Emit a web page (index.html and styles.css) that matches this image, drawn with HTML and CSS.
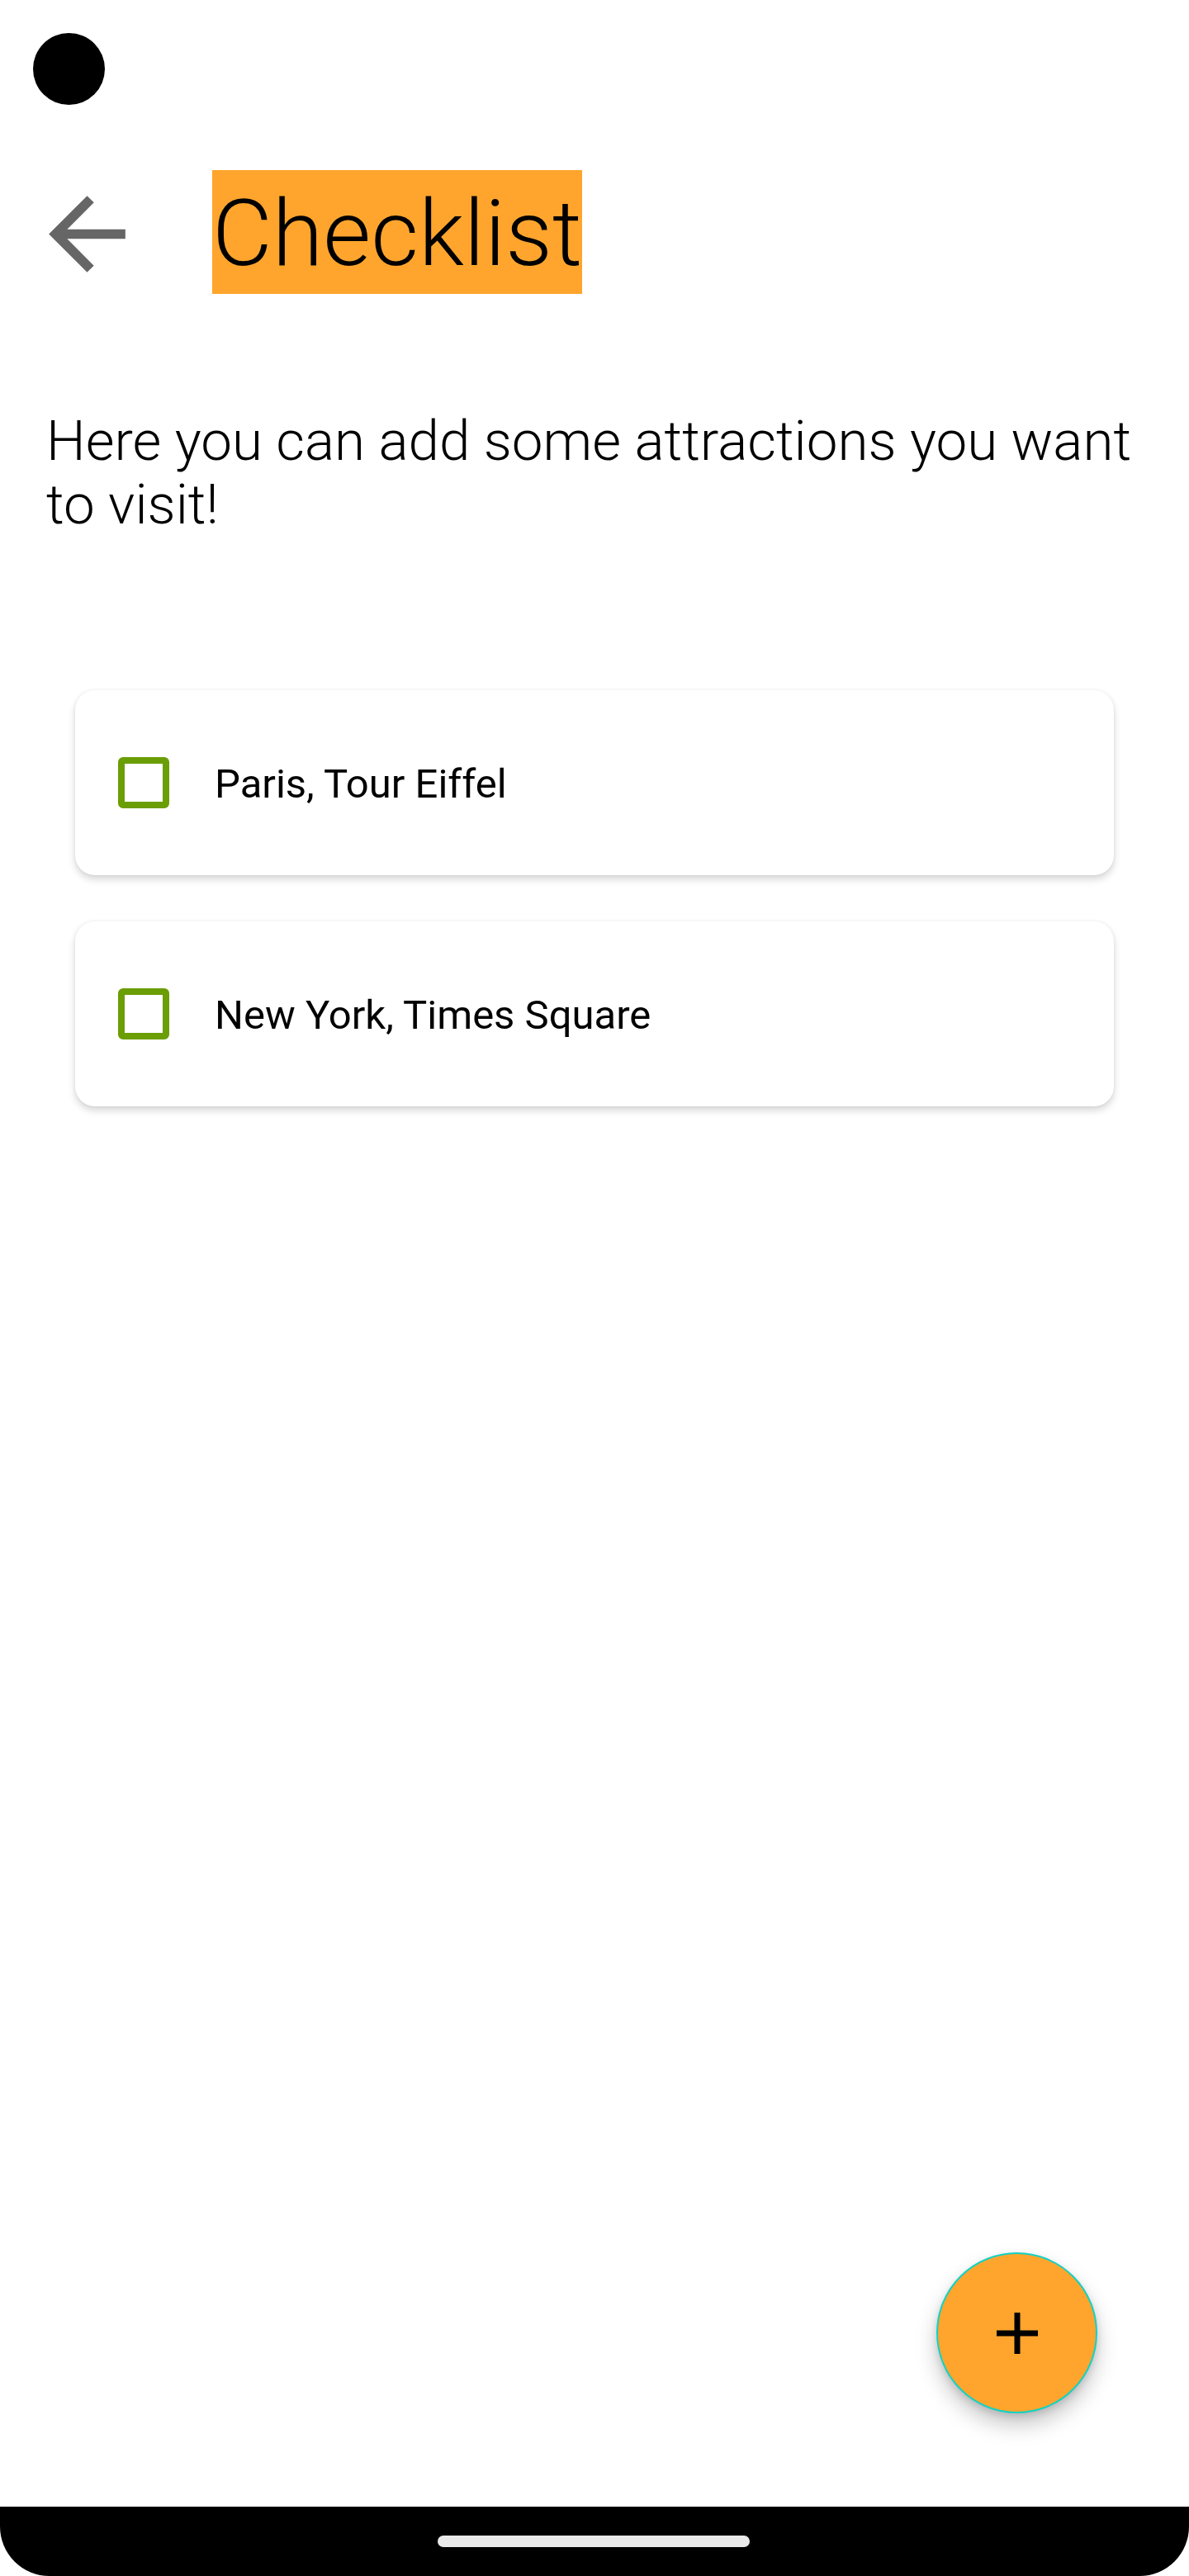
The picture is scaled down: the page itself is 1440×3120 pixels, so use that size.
FILE: index.html
```html
<!DOCTYPE html>
<html lang="en">
<head>
<meta charset="utf-8">
<title>Checklist</title>
<link rel="stylesheet" href="styles.css">
</head>
<body>
<div class="screen">
  <div class="status">
    <span class="camera"></span>
  </div>
  <main class="main">
    <header class="toolbar">
      <svg class="back" viewBox="0 0 24 24" aria-hidden="true">
        <path d="M20 11H7.83l5.59-5.59L12 4l-8 8 8 8 1.41-1.41L7.83 13H20v-2z"/>
      </svg>
      <h1 class="title">Checklist</h1>
    </header>
    <p class="intro">Here you can add some attractions you want to visit!</p>
    <ul class="list">
      <li class="card">
        <span class="checkbox"></span>
        <span class="label">Paris, Tour Eiffel</span>
      </li>
      <li class="card">
        <span class="checkbox"></span>
        <span class="label">New York, Times Square</span>
      </li>
    </ul>
  </main>
  <button class="fab" aria-label="Add">
    <svg viewBox="0 0 50 50" aria-hidden="true">
      <rect x="21.5" y="0" width="7" height="50"/>
      <rect x="0" y="21.5" width="50" height="7"/>
    </svg>
  </button>
  <nav class="navbar">
    <span class="home"></span>
  </nav>
</div>
</body>
</html>
```
FILE: styles.css
```css
html, body {
  margin: 0;
  padding: 0;
  background: #ffffff;
  height: 3120px;
  overflow: hidden;
}

body {
  font-family: Roboto, "Noto Sans", "Liberation Sans", sans-serif;
  color: #000;
}

.screen {
  position: relative;
  width: 1440px;
  height: 3120px;
  display: flex;
  flex-direction: column;
  overflow: hidden;
}

.status {
  height: 206px;
  flex: none;
  box-sizing: border-box;
  padding: 40px 0 0 40px;
}

.camera {
  display: block;
  width: 87px;
  height: 87px;
  border-radius: 50%;
  background: #000;
}

.main {
  flex: 1;
  min-height: 0;
}

.toolbar {
  display: flex;
  align-items: center;
  height: 150px;
}

.back {
  width: 139px;
  height: 139px;
  margin: 4px 0 0 36px;
  fill: #666666;
  flex: none;
}

.title {
  margin: 0 0 0 82px;
  height: 150px;
  line-height: 150px;
  font-size: 112px;
  font-weight: 300;
  background: #ffa52d;
  box-sizing: border-box;
  padding: 2px 0 0 0;
}

.intro {
  margin: 140px 0 0 0;
  padding: 0 44px 0 56px;
  font-size: 67.3px;
  font-weight: 300;
  line-height: 77px;
}

.list {
  list-style: none;
  margin: 186px 0 0 91px;
  padding: 0;
  width: 1258px;
  display: flex;
  flex-direction: column;
  gap: 56px;
}

.card {
  height: 224px;
  background: #fff;
  border-radius: 24px;
  box-shadow: 0 5px 10px rgba(0, 0, 0, 0.16), 0 0 4px rgba(0, 0, 0, 0.06);
  display: flex;
  align-items: center;
  padding-left: 52px;
}

.checkbox {
  width: 62px;
  height: 62px;
  box-sizing: border-box;
  border: 8px solid #6a9e04;
  border-radius: 6px;
  flex: none;
}

.label {
  margin-left: 55px;
  font-size: 49px;
  font-weight: 400;
  padding-top: 2px;
}

.fab {
  position: absolute;
  right: 111px;
  bottom: 197px;
  width: 195px;
  height: 195px;
  border-radius: 50%;
  border: 2px solid #12d2c4;
  background: #ffa52d;
  box-shadow: 0 14px 26px rgba(0, 0, 0, 0.22), 0 4px 8px rgba(0, 0, 0, 0.12);
  display: flex;
  align-items: center;
  justify-content: center;
  padding: 0;
}

.fab svg {
  width: 50px;
  height: 50px;
  fill: #000;
}

.navbar {
  height: 84px;
  flex: none;
  background: #000;
  border-radius: 0 0 60px 60px;
  display: flex;
  justify-content: center;
  align-items: flex-start;
}

.home {
  display: block;
  width: 378px;
  height: 14px;
  margin: 35px 0 0 -2px;
  background: #eaeaea;
  border-radius: 7px;
}
```
